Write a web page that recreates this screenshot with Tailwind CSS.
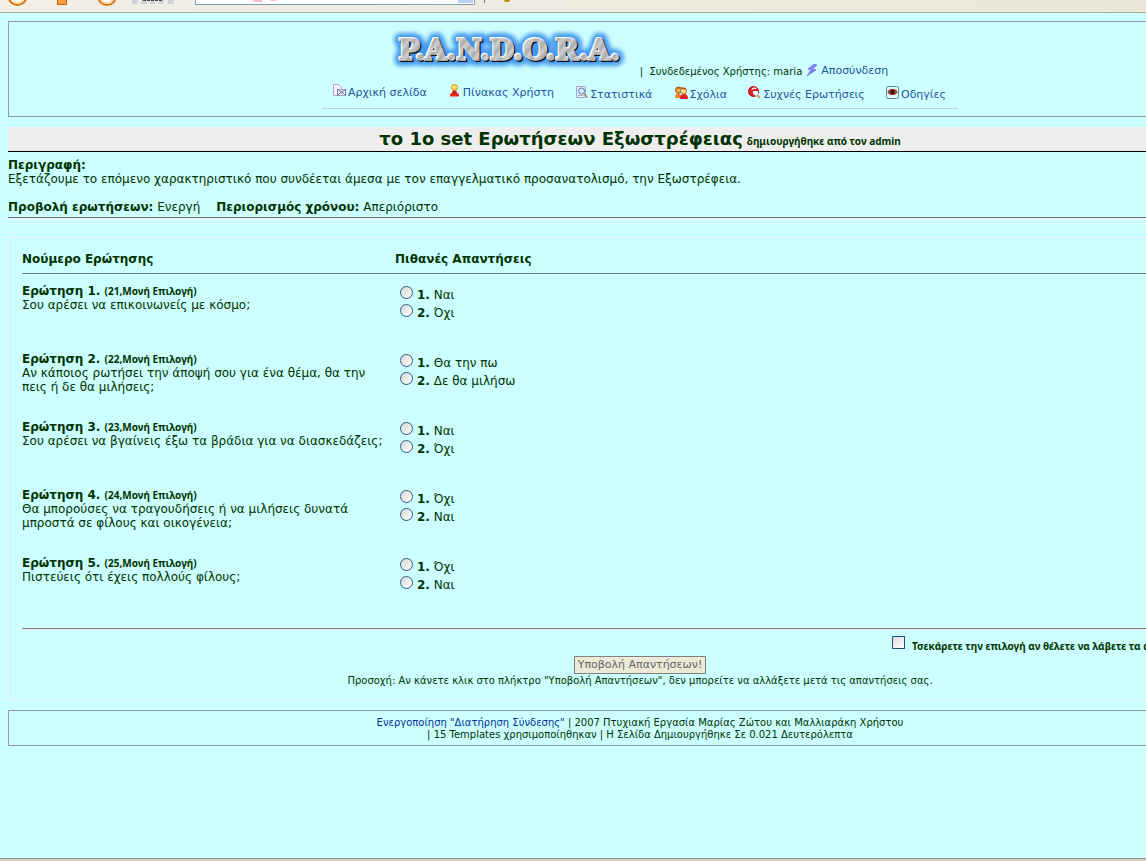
<!DOCTYPE html>
<html lang="el">
<head>
<meta charset="utf-8">
<title>P.A.N.D.O.R.A.</title>
<script src="https://cdn.jsdelivr.net/npm/@tailwindcss/browser@4"></script>
</head>
<body class="min-h-screen overflow-hidden bg-[#ccffff] font-['Verdana','DejaVu_Sans',sans-serif] text-[12px] leading-[14px] text-[#003300]">
<div class="flex min-h-screen min-w-[1280px] flex-col">
  <div class="h-[13px] shrink-0 overflow-hidden border-b border-[#b3a999] bg-linear-to-r from-[#f1efe6] to-[#e9e6d6]">
    <svg class="block h-3 w-[1146px]" viewBox="0 0 1146 12" aria-hidden="true">
      <g fill="#fffdf5" stroke="#d9730d" stroke-width="2"><circle cx="17.500" cy="-4" r="9"/><circle cx="107" cy="-4" r="9"/></g>
      <g fill="none" stroke="#f8c77b"><circle cx="17.500" cy="-4" r="7"/><circle cx="107" cy="-4" r="7"/></g>
      <rect x="57.500" y="-5" width="9" height="9.500" fill="#f5a03f" stroke="#d05f10"/>
      <path d="M132 0h6v4h-6zM141 0h6v4h-6zM150 0h5v4h-5zM159 0h5v4h-5zM168 0h6v4h-6z" fill="#d2d2da"/>
      <path d="M143 .5h19" stroke="#444" stroke-dasharray="3 1"/>
      <path d="M195.500-2V4.500H474.500V-2" fill="#fff" stroke="#7f9db9"/>
      <rect x="253" y="0" width="9" height="2" fill="#f8bcc8"/><rect x="270" y="0" width="6" height="1" fill="#f8bcc8"/>
      <rect x="458" y="-3" width="15" height="6" fill="#b9cdf7"/>
      <path d="M484.500 0v3" stroke="#777"/>
      <path d="M504 0h6l-1 2h-4z" fill="#c28a00"/>
    </svg>
  </div>

  <header class="mx-2 mt-2 flex h-24 shrink-0 flex-col items-center border border-[#999999]">
    <div class="mt-2 flex h-12 items-end">
      <svg class="mr-3 block h-[42px] w-[236px] self-start" viewBox="0 0 236 42" role="img" aria-label="P.A.N.D.O.R.A.">
        <defs>
          <linearGradient id="metal" x1="0" y1="0" x2="6" y2="5" gradientUnits="userSpaceOnUse" spreadMethod="repeat"><stop offset="0" stop-color="#a8a8a8"/><stop offset=".5" stop-color="#cfcfcf"/><stop offset="1" stop-color="#b0b0b0"/></linearGradient>
          <filter id="glow" x="-10%" y="-50%" width="120%" height="200%"><feGaussianBlur stdDeviation="2"/></filter>
        </defs>
        <g font-family="DejaVu Serif" font-weight="700" font-size="28">
          <text x="7" y="30" fill="#4499ee" stroke="#4499ee" stroke-width="12" stroke-linejoin="round" filter="url(#glow)" aria-hidden="true">P.A.N.D.O.R.A.</text>
          <text x="8" y="31" fill="#111" stroke="#111" stroke-width="2" aria-hidden="true">P.A.N.D.O.R.A.</text>
          <text x="6" y="29" fill="#fff" stroke="#fff" stroke-width="2" aria-hidden="true">P.A.N.D.O.R.A.</text>
          <text x="7" y="30" fill="url(#metal)" stroke="url(#metal)" stroke-width="1.500">P.A.N.D.O.R.A.</text>
        </g>
      </svg>
      <p class="flex items-end text-[10px] leading-3"><span class="whitespace-pre">|  Συνδεδεμένος Χρήστης: maria</span>
        <a href="#" class="ml-1 flex items-start text-[11px] leading-[14px] text-[#225599]">
          <svg class="mr-[2px] size-[13px]" viewBox="0 0 13 13"><path d="M8 0 2 5l3 1-4 6 9-6-3-1 4-4z" fill="#8a7cff" stroke="#5f6de0" stroke-width=".6"/></svg>Αποσύνδεση</a></p>
    </div>
    <nav class="flex h-[31px] w-[636px] items-start justify-between border-b border-[#cccccc] pt-2 pr-3 pl-[11px] text-[11px] text-[#225599]">
      <a href="#" class="flex"><svg class="-mt-[2px] mr-[2px] size-[13px]" viewBox="0 0 13 13"><path d="M.5.500h5l3 3v8h-8z" fill="#f2f2fa" stroke="#aaa6c4"/><path d="M4.500 5.500h8v6h-8z" fill="#fff" stroke="#7775a6"/><path d="m4.500 11.500 4-4 4 4M4.500 5.500l4 3 4-3" fill="#dcdcf2" stroke="#7775a6"/></svg>Αρχική σελίδα</a>
      <a href="#" class="flex"><svg class="-mt-[2px] mr-[2px] size-[13px]" viewBox="0 0 13 13"><path d="M2 12.500V10l3-2h3l3 2v2.500z" fill="#ee2b20"/><path d="M6.500 5 9 8l-2.500 3L4 8z" fill="#d01515"/><circle cx="6.500" cy="3.500" r="3" fill="#ffd35a" stroke="#d98a10"/><path d="M4 3h5" stroke="#fff0a0"/></svg>Πίνακας Χρήστη</a>
      <a href="#" class="flex pt-[2px]"><svg class="-mt-[2px] mr-[2px] size-[13px]" viewBox="0 0 13 13"><path d="M1.500.5h9v11h-9z" fill="#e8eefc" stroke="#9fa8cc"/><path d="M3 9.500h5" stroke="#9fa8cc"/><circle cx="6.500" cy="5" r="3" fill="#cdeeff" stroke="#5d7fc4"/><path d="m9 7.500 3 4" stroke="#b08040" stroke-width="1.500"/></svg>Στατιστικά</a>
      <a href="#" class="flex pt-[2px]"><svg class="-mt-[2px] mr-[2px] h-[13px] w-[14px]" viewBox="0 0 14 13"><path d="M1 12c0-4 2-5 4-5l4 5z" fill="#f08030"/><path d="M6 13c0-4 2-5 4-5s4 1 4 5z" fill="#e02020"/><circle cx="4.500" cy="4" r="3" fill="#f6b65c" stroke="#a04a10"/><circle cx="9.500" cy="5" r="3" fill="#ffe0a0" stroke="#c07818"/><path d="M2 2.500 5 1l7 1v2L8 3z" fill="#b85a18"/></svg>Σχόλια</a>
      <a href="#" class="flex pt-[2px]"><svg class="-mt-[2px] mr-[2px] size-[13px]" viewBox="0 0 13 13"><circle cx="5.500" cy="5.500" r="5" fill="#dd1c24" stroke="#b01018"/><path d="M4 4c.5-2 3-2.500 4-1" fill="none" stroke="#fff" stroke-width="1.200"/><path d="M5 5h5v4l-2 1-3-2z" fill="#e0f4ff"/><path d="m9 9 3 3" stroke="#c9a060" stroke-width="2"/></svg>Συχνές Ερωτήσεις</a>
      <a href="#" class="flex pt-[2px]"><svg class="-mt-[2px] mr-[2px] size-[13px]" viewBox="0 0 13 13"><rect x=".5" y=".5" width="12" height="12" rx="2" fill="#e8ffff" stroke="#4a9090"/><ellipse cx="6.500" cy="6" rx="5" ry="3.200" fill="#9c4f40"/><circle cx="6.500" cy="6" r="2.200" fill="#40100c"/></svg>Οδηγίες</a>
    </nav>
  </header>

  <main class="mx-2 mt-[10px] shrink-0">
    <h1 class="flex h-[25px] items-baseline justify-center gap-1 border-b border-black bg-[#eeeeee] text-[18px] leading-6 font-bold">το 1ο set Ερωτήσεων Εξωστρέφειας <small class="font-['Noto_Sans',sans-serif] text-[10px]">δημιουργήθηκε από τον admin</small></h1>
    <section class="pt-[6px]">
      <b>Περιγραφή:</b>
      <p class="mb-[14px]">Εξετάζουμε το επόμενο χαρακτηριστικό που συνδέεται άμεσα με τον επαγγελματικό προσανατολισμό, την Εξωστρέφεια.</p>
      <p class="flex gap-4"><span><b>Προβολή ερωτήσεων:</b> Ενεργή</span><span><b>Περιορισμός χρόνου:</b> Απεριόριστο</span></p>
    </section>
    <hr class="mt-[3px] h-[2px] border-t border-b border-t-[#777777] border-b-[#eeeeee]">

    <form class="mt-[18px] border border-[#eeeeee] px-[13px] pb-3">
      <table class="w-full table-fixed text-left">
        <thead>
          <tr class="h-[35px] border-b border-[#777777]"><th class="w-[373px] p-0 pt-[7px]">Νούμερο Ερώτησης</th><th class="p-0 pt-[7px]">Πιθανές Απαντήσεις</th></tr>
        </thead>
        <tbody class="align-top">
          <tr class="h-[79px]"><td class="pt-[10px]"><b>Ερώτηση 1. <small class="font-['Noto_Sans',sans-serif] text-[10px] leading-none">(21,Μονή Επιλογή)</small></b><p>Σου αρέσει να επικοινωνείς με κόσμο;</p></td>
            <td class="pt-3 pl-[5px]"><label class="flex h-[18px] gap-1"><input type="radio" name="q1" class="size-[13px] appearance-none rounded-full border border-[#2c5a8c] bg-linear-to-br from-[#d8d8d2] to-white"><span class="pt-[2px]"><b>1.</b> Ναι</span></label><label class="flex h-[18px] gap-1"><input type="radio" name="q1" class="size-[13px] appearance-none rounded-full border border-[#2c5a8c] bg-linear-to-br from-[#d8d8d2] to-white"><span class="pt-[2px]"><b>2.</b> Όχι</span></label></td></tr>
          <tr class="h-[68px]"><td><b>Ερώτηση 2. <small class="font-['Noto_Sans',sans-serif] text-[10px] leading-none">(22,Μονή Επιλογή)</small></b><p>Αν κάποιος ρωτήσει την άποψή σου για ένα θέμα, θα την<br>πεις ή δε θα μιλήσεις;</p></td>
            <td class="pt-[2px] pl-[5px]"><label class="flex h-[18px] gap-1"><input type="radio" name="q2" class="size-[13px] appearance-none rounded-full border border-[#2c5a8c] bg-linear-to-br from-[#d8d8d2] to-white"><span class="pt-[2px]"><b>1.</b> Θα την πω</span></label><label class="flex h-[18px] gap-1"><input type="radio" name="q2" class="size-[13px] appearance-none rounded-full border border-[#2c5a8c] bg-linear-to-br from-[#d8d8d2] to-white"><span class="pt-[2px]"><b>2.</b> Δε θα μιλήσω</span></label></td></tr>
          <tr class="h-[68px]"><td><b>Ερώτηση 3. <small class="font-['Noto_Sans',sans-serif] text-[10px] leading-none">(23,Μονή Επιλογή)</small></b><p>Σου αρέσει να βγαίνεις έξω τα βράδια για να διασκεδάζεις;</p></td>
            <td class="pt-[2px] pl-[5px]"><label class="flex h-[18px] gap-1"><input type="radio" name="q3" class="size-[13px] appearance-none rounded-full border border-[#2c5a8c] bg-linear-to-br from-[#d8d8d2] to-white"><span class="pt-[2px]"><b>1.</b> Ναι</span></label><label class="flex h-[18px] gap-1"><input type="radio" name="q3" class="size-[13px] appearance-none rounded-full border border-[#2c5a8c] bg-linear-to-br from-[#d8d8d2] to-white"><span class="pt-[2px]"><b>2.</b> Όχι</span></label></td></tr>
          <tr class="h-[68px]"><td><b>Ερώτηση 4. <small class="font-['Noto_Sans',sans-serif] text-[10px] leading-none">(24,Μονή Επιλογή)</small></b><p>Θα μπορούσες να τραγουδήσεις ή να μιλήσεις δυνατά<br>μπροστά σε φίλους και οικογένεια;</p></td>
            <td class="pt-[2px] pl-[5px]"><label class="flex h-[18px] gap-1"><input type="radio" name="q4" class="size-[13px] appearance-none rounded-full border border-[#2c5a8c] bg-linear-to-br from-[#d8d8d2] to-white"><span class="pt-[2px]"><b>1.</b> Όχι</span></label><label class="flex h-[18px] gap-1"><input type="radio" name="q4" class="size-[13px] appearance-none rounded-full border border-[#2c5a8c] bg-linear-to-br from-[#d8d8d2] to-white"><span class="pt-[2px]"><b>2.</b> Ναι</span></label></td></tr>
          <tr class="h-[72px]"><td><b>Ερώτηση 5. <small class="font-['Noto_Sans',sans-serif] text-[10px] leading-none">(25,Μονή Επιλογή)</small></b><p>Πιστεύεις ότι έχεις πολλούς φίλους;</p></td>
            <td class="pt-[2px] pl-[5px]"><label class="flex h-[18px] gap-1"><input type="radio" name="q5" class="size-[13px] appearance-none rounded-full border border-[#2c5a8c] bg-linear-to-br from-[#d8d8d2] to-white"><span class="pt-[2px]"><b>1.</b> Όχι</span></label><label class="flex h-[18px] gap-1"><input type="radio" name="q5" class="size-[13px] appearance-none rounded-full border border-[#2c5a8c] bg-linear-to-br from-[#d8d8d2] to-white"><span class="pt-[2px]"><b>2.</b> Ναι</span></label></td></tr>
        </tbody>
      </table>
      <hr class="h-[2px] border-t border-b border-t-[#777777] border-b-[#eeeeee]">
      <label class="ml-[870px] flex h-[26px] gap-[7px] pt-[6px] font-['Noto_Sans',sans-serif] text-[10px] leading-3 font-bold whitespace-nowrap"><input type="checkbox" class="size-[13px] shrink-0 appearance-none border border-[#1c5180] bg-linear-to-br from-[#dcdcd7] to-white"><span class="pt-1">Τσεκάρετε την επιλογή αν θέλετε να λάβετε τα α</span></label>
      <div class="flex flex-col items-center text-[10px] leading-3">
        <button type="button" disabled class="h-[18px] w-[132px] border border-[#808080] bg-[#ece9d8] text-[11px] leading-4 whitespace-nowrap text-[#666666]">Υποβολή Απαντήσεων!</button>
        <p class="pt-px">Προσοχή: Αν κάνετε κλικ στο πλήκτρο "Υποβολή Απαντήσεων", δεν μπορείτε να αλλάξετε μετά τις απαντήσεις σας.</p>
      </div>
    </form>
  </main>

  <footer class="mx-2 mt-[10px] shrink-0 border border-[#999999] pt-[6px] pb-1 text-center text-[10px] leading-3">
    <p><a href="#" class="text-[#003399]">Ενεργοποίηση "Διατήρηση Σύνδεσης"</a> | 2007 Πτυχιακή Εργασία Μαρίας Ζώτου και Μαλλιαράκη Χρήστου</p>
    <p>| 15 Templates χρησιμοποίηθηκαν | Η Σελίδα Δημιουργήθηκε Σε 0.021 Δευτερόλεπτα</p>
  </footer>
  <div class="mt-auto h-[3px] shrink-0 border-t border-[#8f8a7c] bg-[#d8d2bd]"></div>
</div>
</body>
</html>
